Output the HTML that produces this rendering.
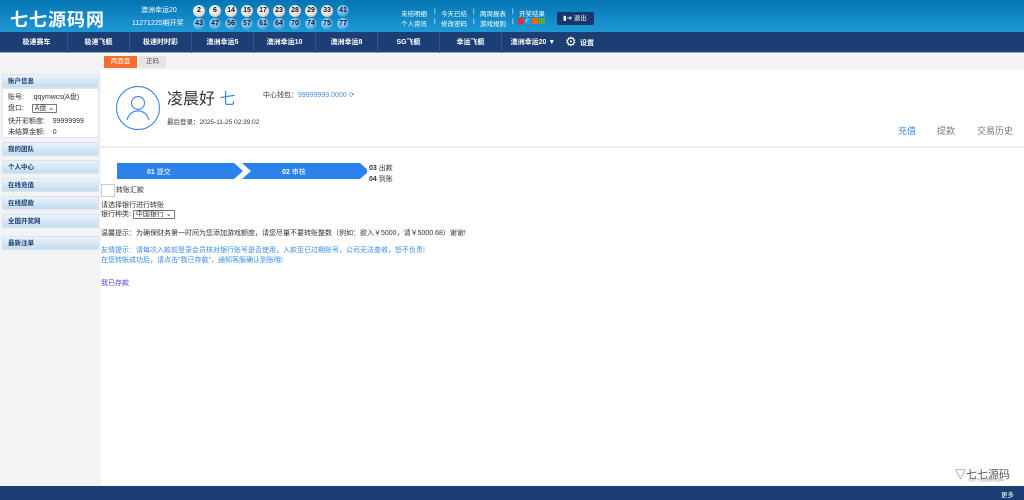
<!DOCTYPE html>
<html><head><meta charset="utf-8"><style>
*{margin:0;padding:0;box-sizing:border-box}
body{width:1024px;height:500px;position:relative;overflow:hidden;background:#fff;font-family:"Liberation Sans","Noto Sans CJK SC",sans-serif;font-size:7px;color:#333}
.a{position:absolute;white-space:nowrap}
#hd{position:absolute;left:0;top:0;width:1024px;height:32px;background:linear-gradient(#0475b2,#1f98d6)}
#nav{position:absolute;left:0;top:32px;width:1024px;height:21px;background:#1c3e74;border-bottom:1px solid #8aa0c0}
.ball{position:absolute;width:12px;height:12px;border-radius:50%;font-size:7px;font-weight:bold;text-align:center;line-height:12px;color:#111}
.b1{background:radial-gradient(circle at 40% 35%,#fff,#ddd 60%,#999)}
.b2{background:radial-gradient(circle at 40% 35%,#bfe6ff,#49a8e8 60%,#1566b0)}
.ni{position:absolute;top:0;height:21px;line-height:21px;width:62px;text-align:center;color:#fff;font-size:7px;font-weight:bold;border-right:1px solid #2d5490}
.sb{position:absolute;left:2px;width:97px;height:14px;background:linear-gradient(#eaf3fb,#c4dbef);border:1px solid #d8e6f3;font-weight:bold;font-size:6.5px;color:#1c3e74;line-height:13px;padding-left:5px}
.hl{position:absolute;color:#fff;font-size:6.5px;white-space:nowrap}
</style></head><body>
<div id="hd"></div>
<div class="a" style="left:10px;top:6px;font-size:18px;font-weight:bold;color:#fff;letter-spacing:1px">七七源码网</div>
<div class="a" style="left:141px;top:5px;color:#fff;font-size:7px">澳洲幸运20</div>
<div class="a" style="left:132px;top:18px;color:#fff;font-size:7px">11271225期开奖</div>
<div class="ball b1" style="left:193px;top:5px">2</div><div class="ball b1" style="left:209px;top:5px">6</div><div class="ball b1" style="left:225px;top:5px">14</div><div class="ball b1" style="left:241px;top:5px">15</div><div class="ball b1" style="left:257px;top:5px">17</div><div class="ball b1" style="left:273px;top:5px">23</div><div class="ball b1" style="left:289px;top:5px">28</div><div class="ball b1" style="left:305px;top:5px">29</div><div class="ball b1" style="left:321px;top:5px">33</div><div class="ball b2" style="left:337px;top:5px">41</div>
<div class="ball b2" style="left:193px;top:18px">43</div><div class="ball b2" style="left:209px;top:18px">47</div><div class="ball b2" style="left:225px;top:18px">56</div><div class="ball b2" style="left:241px;top:18px">57</div><div class="ball b2" style="left:257px;top:18px">61</div><div class="ball b2" style="left:273px;top:18px">64</div><div class="ball b2" style="left:289px;top:18px">70</div><div class="ball b2" style="left:305px;top:18px">74</div><div class="ball b2" style="left:321px;top:18px">75</div><div class="ball b2" style="left:337px;top:18px">77</div>
<div class="hl" style="left:401px;top:8px">未结明细</div><div class="hl" style="left:434px;top:8px">|</div><div class="hl" style="left:441px;top:8px">今天已结</div><div class="hl" style="left:473px;top:8px">|</div><div class="hl" style="left:480px;top:8px">两周报表</div><div class="hl" style="left:512px;top:8px">|</div><div class="hl" style="left:519px;top:8px">开奖结果</div>
<div class="hl" style="left:401px;top:18px">个人资讯</div><div class="hl" style="left:434px;top:18px">|</div><div class="hl" style="left:441px;top:18px">修改密码</div><div class="hl" style="left:473px;top:18px">|</div><div class="hl" style="left:480px;top:18px">游戏规则</div><div class="hl" style="left:512px;top:18px">|</div>
<div class="a" style="left:518px;top:18px;width:6px;height:6px;background:#d33"></div><div class="a" style="left:525px;top:18px;width:6px;height:6px;background:#39c;color:#fff;font-size:5px;line-height:6px">✓</div><div class="a" style="left:532px;top:18px;width:6px;height:6px;background:#e60"></div><div class="a" style="left:539px;top:18px;width:6px;height:6px;background:#5a3"></div>
<div class="a" style="left:557px;top:12px;width:37px;height:13px;background:#17376b;border-radius:2px;color:#fff;font-size:6.5px;line-height:13px;padding-left:6px">▮➜ 退出</div>
<div id="nav">
<div class="ni" style="left:6px">极速赛车</div><div class="ni" style="left:68px">极速飞艇</div><div class="ni" style="left:130px">极速时时彩</div><div class="ni" style="left:192px">澳洲幸运5</div><div class="ni" style="left:254px">澳洲幸运10</div><div class="ni" style="left:316px">澳洲幸运8</div><div class="ni" style="left:378px">SG飞艇</div><div class="ni" style="left:440px">幸运飞艇</div><div class="ni" style="left:502px;border:none">澳洲幸运20 ▼</div>
<div class="a" style="left:565px;top:2px;color:#fff;font-size:13px">⚙</div><div class="a" style="left:580px;top:6px;color:#fff;font-weight:bold">设置</div>
</div>
<div class="a" style="left:0;top:54px;width:1024px;height:16px;background:#f4f4f4"></div>
<div class="a" style="left:104px;top:56px;width:33px;height:12px;background:#f76d2d;color:#fff;text-align:center;line-height:12px;font-size:6.5px">两面盘</div>
<div class="a" style="left:139px;top:56px;width:27px;height:12px;background:#e4e4e4;text-align:center;line-height:12px;font-size:6.5px;color:#555">正码</div>
<div class="a" style="left:0;top:70px;width:101px;height:416px;background:#f3f3f3"></div>
<div class="sb" style="top:74px">账户信息</div>
<div class="a" style="left:2px;top:88px;width:97px;height:50px;background:#fff;border:1px solid #dce6f0"></div>
<div class="a" style="left:8px;top:92px">账号: &nbsp; &nbsp; qqymwcs(A盘)</div>
<div class="a" style="left:8px;top:103px">盘口: &nbsp; &nbsp;<span style="border:1px solid #777;padding:0 2px;border-radius:1px">A盘 ⌄</span></div>
<div class="a" style="left:8px;top:116px">快开彩额度: &nbsp; &nbsp;99999999</div>
<div class="a" style="left:8px;top:127px">未结算金额: &nbsp; &nbsp;0</div>
<div class="sb" style="top:142px">我的团队</div><div class="sb" style="top:160px">个人中心</div><div class="sb" style="top:178px">在线充值</div><div class="sb" style="top:196px">在线提款</div><div class="sb" style="top:214px">全国开奖网</div><div class="sb" style="top:236px">最新注单</div>
<svg class="a" style="left:115px;top:85px" width="46" height="46" viewBox="0 0 46 46"><circle cx="23" cy="23" r="21.5" fill="none" stroke="#4a90e2" stroke-width="1.2"/><circle cx="23" cy="18" r="6.5" fill="none" stroke="#4a90e2" stroke-width="1.2"/><path d="M12 35c2-7 6-9 11-9s9 2 11 9" fill="none" stroke="#4a90e2" stroke-width="1.2"/></svg>
<div class="a" style="left:167px;top:85px;font-size:16px;color:#333">凌晨好 <span style="color:#3a8ee6">七</span></div>
<div class="a" style="left:263px;top:90px;font-size:7px">中心钱包：<span style="color:#4a90e2">99999999.0000 ⟳</span></div>
<div class="a" style="left:167px;top:116px;font-size:6.5px">最后登录：2025-11-25 02:39:02</div>
<div class="a" style="left:898px;top:124px;font-size:9px;color:#3a8ee6">充值</div>
<div class="a" style="left:937px;top:124px;font-size:9px;color:#777">提款</div>
<div class="a" style="left:977px;top:124px;font-size:9px;color:#777">交易历史</div>
<div class="a" style="left:101px;top:146px;width:923px;height:2px;background:#eee"></div>
<svg class="a" style="left:117px;top:163px" width="250" height="16"><polygon points="0,0 117,0 126,8 117,16 0,16" fill="#2b82ea"/><polygon points="125,0 243,0 252,8 243,16 125,16 134,8" fill="#2b82ea"/></svg>
<div class="a" style="left:147px;top:167px;color:#fff;font-size:7px"><b>01</b> 提交</div>
<div class="a" style="left:282px;top:167px;color:#fff;font-size:7px"><b>02</b> 审核</div>
<div class="a" style="left:369px;top:163px;font-size:7px"><b>03</b> 出款</div>
<div class="a" style="left:369px;top:174px;font-size:7px"><b>04</b> 到账</div>
<div class="a" style="left:101px;top:184px;width:14px;height:13px;border:1px solid #ccc"></div>
<div class="a" style="left:116px;top:185px">转账汇款</div>
<div class="a" style="left:101px;top:200px">请选择银行进行转账</div>
<div class="a" style="left:101px;top:209px">银行种类: <span style="border:1px solid #777;padding:0 2px;border-radius:1px">中国银行 ⌄</span></div>
<div class="a" style="left:101px;top:228px">温馨提示：为确保财务第一时间为您添加游戏额度，请您尽量不要转账整数（例如：欲入￥5000，请￥5000.68）谢谢!</div>
<div class="a" style="left:101px;top:245px;color:#3a8ee6">友情提示：请每次入款前登录会员核对银行账号是否使用，入款至已过期账号，公司无法查收，恕不负责!</div>
<div class="a" style="left:101px;top:255px;color:#3a8ee6">在您转账成功后，请点击"我已存款"，通知客服确认到账哦!</div>
<div class="a" style="left:101px;top:278px;color:#5b3ae6">我已存款</div>
<div class="a" style="left:955px;top:466px;font-size:11px;color:#555">▽七七源码</div>
<div class="a" style="left:968px;top:478px;font-size:3px;color:#888">专注于开发高质量专业源码</div>
<div class="a" style="left:0;top:486px;width:1024px;height:14px;background:#1c3e74"></div>
<div class="a" style="left:1001px;top:489px;color:#fff;font-size:6.5px">更多</div>
</body></html>
